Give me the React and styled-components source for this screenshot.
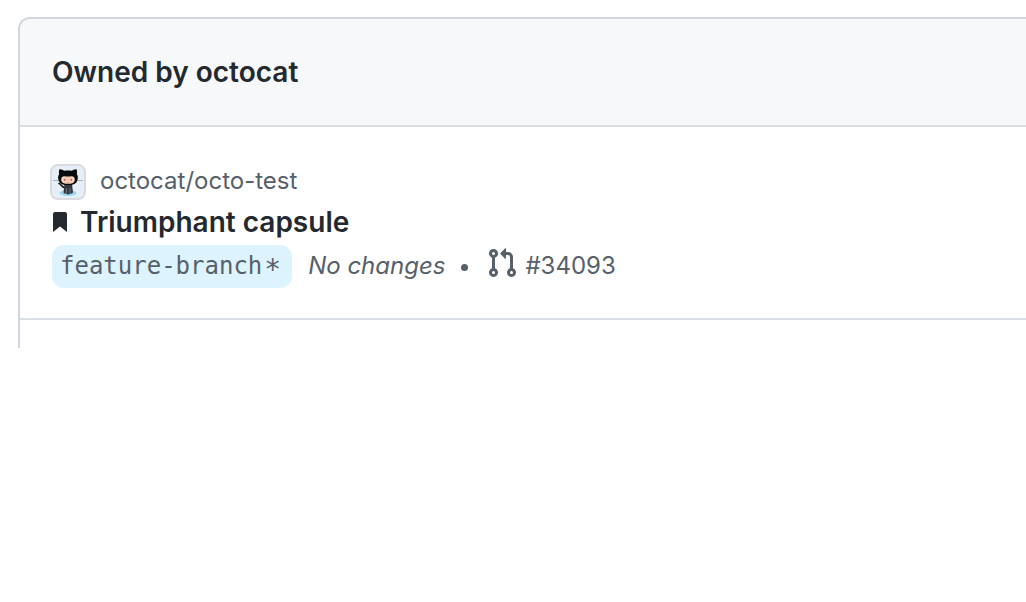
import React from 'react';
import styled, { createGlobalStyle } from 'styled-components';

const GlobalStyle = createGlobalStyle`
  * { box-sizing: border-box; }
  body {
    margin: 0;
    background: #ffffff;
    color: #24292f;
    font-family: Inter, "Liberation Sans", sans-serif;
    overflow-x: hidden;
  }
`;

const Page = styled.main`
  padding: 17px 0 0 18px;
`;

const Panel = styled.section`
  border: 2px solid #d0d7de;
  border-right: 0;
  border-bottom: 0;
  border-top-left-radius: 12px;
  overflow: hidden;
  padding-bottom: 28px;
`;

const PanelHeader = styled.header`
  padding: 35px 32px;
  background: #f6f8fa;
  border-bottom: 2px solid #d8dee4;
`;

const PanelTitle = styled.h2`
  margin: 0;
  font-size: 28px;
  line-height: 36px;
  font-weight: 600;
`;

const Row = styled.article`
  display: flex;
  flex-direction: column;
  padding: 36px 32px 30px;
  border-bottom: 2px solid #d8dee4;
`;

const RepoLine = styled.div`
  display: flex;
  align-items: center;
  gap: 14px;
  height: 38px;
  margin-left: -2px;
  font-size: 24px;
`;

const RepoLink = styled.a`
  padding-bottom: 2px;
  color: #57606a;
  line-height: 36px;
  text-decoration: none;
`;

const TitleLine = styled.div`
  display: flex;
  align-items: center;
  gap: 12px;
  height: 44px;
  padding-bottom: 2px;
`;

const Title = styled.h3`
  margin: 0;
  font-size: 28px;
  line-height: 36px;
  font-weight: 600;
`;

const MetaLine = styled.div`
  display: flex;
  align-items: center;
  font-size: 24px;
  line-height: 36px;
  color: #57606a;
`;

const Branch = styled.a`
  display: flex;
  gap: 2px;
  height: 43px;
  padding: 3px 11px 3px 8px;
  border-radius: 12px;
  background: #ddf4ff;
  color: #57606a;
  font-family: "DejaVu Sans Mono", "Liberation Mono", monospace;
  font-size: 24px;
  line-height: 37px;
  text-decoration: none;
`;

const DirtyMark = styled.span`
  font-size: 28px;
  line-height: 44px;
`;

const Changes = styled.em`
  margin-left: 16px;
  padding-bottom: 2px;
`;

const Separator = styled.span`
  width: 7px;
  height: 7px;
  margin: 2px 18px 0 16px;
  border-radius: 50%;
  background: #57606a;
`;

const PullLink = styled.a`
  display: flex;
  align-items: center;
  gap: 7px;
  padding-bottom: 2px;
  color: #57606a;
  text-decoration: none;

  svg {
    margin-bottom: 6px;
  }
`;

function Avatar() {
  return (
    <svg width="36" height="36" viewBox="0 0 36 36" role="img" aria-label="octocat">
      <rect x="1" y="1" width="34" height="34" rx="7" fill="#e6eef8" stroke="#d9dbdf" strokeWidth="2" />
      <path d="M3 16.5h30" stroke="#a9b5c1" strokeWidth="1" />
      <ellipse cx="18" cy="29" rx="8.5" ry="3" fill="#9bd3f2" />
      <path d="M9 19.5c2 0 2 3.500 6 4" fill="none" stroke="#15191d" strokeWidth="1.7" strokeLinecap="round" />
      <path d="M14.5 20h7.500l1 8.500-1.500 1.300-1.200-.5-.5.9h-3.200l-.6-.9-1.400.4-1.100-1.200z" fill="#33383e" />
      <path d="M16.500 24v5M20 24v5" stroke="#9aa2aa" strokeWidth=".6" />
      <path d="M9.500 5.300c1.900-.2 3.500.7 4.600 1.500 2.400-.5 5.400-.5 7.800 0 1.100-.8 2.700-1.700 4.600-1.500.8 1.700.7 3.300.3 4.600 1.300 1.800 1.300 3.900.7 6-.9 3.800-4.300 5.200-9.500 5.200s-8.600-1.400-9.500-5.200c-.6-2.100-.6-4.200.7-6-.4-1.300-.5-2.900.3-4.600z" fill="#080a0c" />
      <path d="M13 12.500c1.700-.8 3.300 0 5 0s3.300-.8 5 0c2.300 1 2.200 4.300.9 5.700-1.200 1.200-3.100 1.500-5.900 1.500s-4.700-.3-5.900-1.500c-1.300-1.400-1.400-4.700.9-5.700z" fill="#f4cbb2" />
      <ellipse cx="14.500" cy="15.700" rx="1.500" ry="2" fill="#fff0e8" />
      <ellipse cx="21.500" cy="15.700" rx="1.500" ry="2" fill="#fff0e8" />
      <ellipse cx="14.600" cy="15.800" rx="1" ry="1.400" fill="#b66d62" />
      <ellipse cx="21.400" cy="15.800" rx="1" ry="1.400" fill="#b66d62" />
      <path d="M17.300 18.500q.7.6 1.400 0" fill="none" stroke="#b66d62" strokeWidth=".5" />
    </svg>
  );
}

function BookmarkIcon() {
  return (
    <svg width="16" height="20" viewBox="0 0 16 20" fill="#24292f" aria-hidden="true">
      <path d="M3 0h10a2 2 0 0 1 2 2v18l-7-5.600L1 20V2a2 2 0 0 1 2-2z" />
    </svg>
  );
}

function PullRequestIcon() {
  return (
    <svg width="32" height="32" viewBox="0 0 16 16" fill="currentColor" aria-hidden="true">
      <path
        fillRule="evenodd"
        d="M7.177 3.073L9.573.677A.25.25 0 0110 .854v4.792a.25.25 0 01-.427.177L7.177 3.427a.25.25 0 010-.354zM3.750 2.500a.75.75 0 100 1.500.75.75 0 000-1.500zm-2.250.75a2.250 2.250 0 113 2.122v5.256a2.251 2.251 0 11-1.500 0V5.372A2.250 2.250 0 011.500 3.250zM11 2.500h-1V4h1a1 1 0 011 1v5.628a2.251 2.251 0 101.500 0V5A2.500 2.500 0 0011 2.500zm1 10.250a.75.75 0 111.500 0 .75.75 0 01-1.500 0zM3.750 12a.75.75 0 100 1.500.75.75 0 000-1.500z"
      />
    </svg>
  );
}

export default function App() {
  return (
    <>
      <GlobalStyle />
      <Page>
        <Panel>
          <PanelHeader>
            <PanelTitle>Owned by octocat</PanelTitle>
          </PanelHeader>
          <Row>
            <RepoLine>
              <Avatar />
              <RepoLink href="#repo">octocat/octo-test</RepoLink>
            </RepoLine>
            <TitleLine>
              <BookmarkIcon />
              <Title>Triumphant capsule</Title>
            </TitleLine>
            <MetaLine>
              <Branch href="#branch">
                <span>feature-branch</span>
                <DirtyMark>*</DirtyMark>
              </Branch>
              <Changes>No changes</Changes>
              <Separator />
              <PullLink href="#pull">
                <PullRequestIcon />
                <span>#34093</span>
              </PullLink>
            </MetaLine>
          </Row>
        </Panel>
      </Page>
    </>
  );
}
